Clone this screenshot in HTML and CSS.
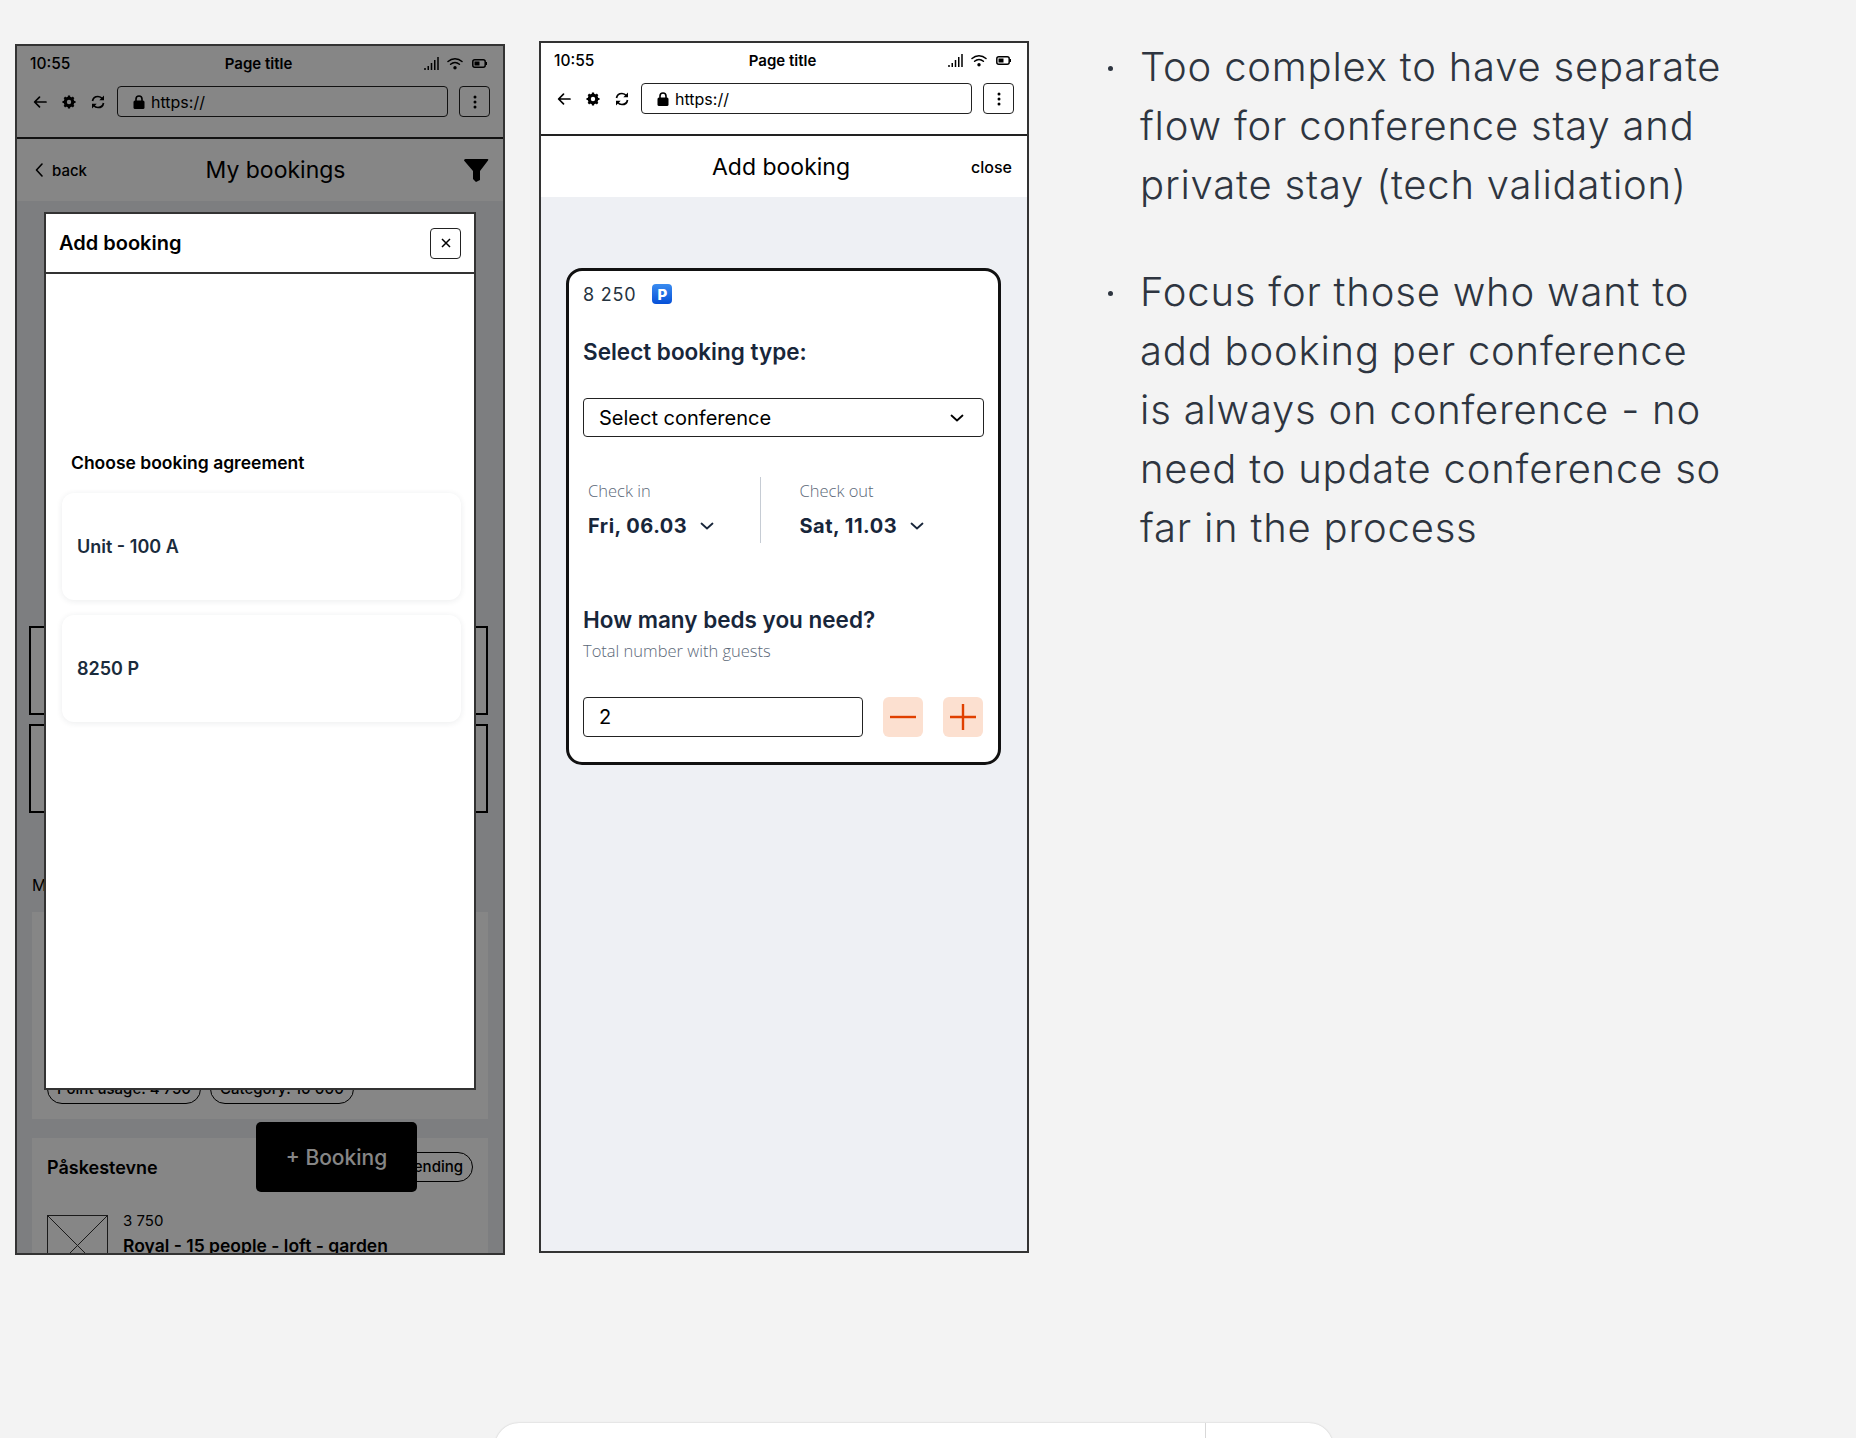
FILE: index.html
```html
<!DOCTYPE html>
<html lang="en">

<head>
    <meta charset="utf-8">
    <meta name="viewport" content="width=device-width, initial-scale=1.0">
    <title>Add booking flow</title>
    <link rel="stylesheet" href="styles.css">
</head>

<body>
    <svg class="defs" width="0" height="0">
        <symbol id="i-signal" viewBox="0 0 15 14">
            <path d="M1 14v-2M4.250 14v-4M7.500 14V7M10.750 14V4M14 14V1" stroke="currentColor" stroke-width="1.500" fill="none"/>
        </symbol>
        <symbol id="i-wifi" viewBox="0 0 16 13">
            <path d="M1 4.500C5 .8 11 .8 15 4.500M3.600 7.300c2.600-2.300 6.200-2.300 8.800 0" stroke="currentColor" stroke-width="1.500" fill="none" stroke-linecap="round"/>
            <circle cx="8" cy="10.800" r="1.700" fill="currentColor"/>
        </symbol>
        <symbol id="i-battery" viewBox="0 0 15 9">
            <rect x=".8" y=".8" width="12.400" height="7.400" rx="2" stroke="currentColor" stroke-width="1.500" fill="none"/>
            <rect x="2.500" y="2.500" width="5" height="4" fill="currentColor"/>
            <rect x="13.500" y="3" width="1.500" height="3" fill="currentColor"/>
        </symbol>
        <symbol id="i-back" viewBox="0 0 16 16">
            <path d="M14 8H3M7.500 3.200 2.600 8l4.900 4.800" stroke="currentColor" stroke-width="1.700" fill="none" stroke-linecap="round" stroke-linejoin="round"/>
        </symbol>
        <symbol id="i-gear" viewBox="0 0 16 16">
            <circle cx="8" cy="8" r="3.900" stroke="currentColor" stroke-width="3" fill="none"/>
            <path d="M8 1.500v13M1.500 8h13M3.400 3.400l9.200 9.200M12.600 3.400l-9.200 9.200" stroke="currentColor" stroke-width="2.200"/>
            <circle cx="8" cy="8" r="2.200" fill="var(--hole)"/>
        </symbol>
        <symbol id="i-reload" viewBox="0 0 16 16">
            <path d="M2.500 7C3 4 5.300 2.500 8 2.500c1.900 0 3.300.8 4.500 2.300M13.500 9c-.5 3-2.800 4.500-5.500 4.500-1.900 0-3.300-.8-4.500-2.300" stroke="currentColor" stroke-width="1.700" fill="none"/>
            <path d="M14 1.500v4.700H9.300zM2 14.500V9.800h4.700z" fill="currentColor"/>
        </symbol>
        <symbol id="i-lock" viewBox="0 0 12 14">
            <path d="M3 6V4a3 3 0 0 1 6 0v2" stroke="currentColor" stroke-width="1.600" fill="none"/>
            <rect x=".5" y="5.500" width="11" height="8.500" rx="1.500" fill="currentColor"/>
        </symbol>
        <symbol id="i-dots" viewBox="0 0 4 14">
            <circle cx="2" cy="2" r="1.500" fill="currentColor"/>
            <circle cx="2" cy="7" r="1.500" fill="currentColor"/>
            <circle cx="2" cy="12" r="1.500" fill="currentColor"/>
        </symbol>
        <symbol id="i-chevron" viewBox="0 0 14 8">
            <path d="M1.500 1.500 7 6.500l5.500-5" stroke="currentColor" stroke-width="1.800" fill="none" stroke-linecap="round" stroke-linejoin="round"/>
        </symbol>
    </svg>

    <div class="board">
        <div class="phone phone-dim">
            <div class="status">
                <span class="time">10:55</span>
                <span class="page-title">Page title</span>
                <span class="status-icons">
                    <svg class="ic-signal"><use href="#i-signal"/></svg>
                    <svg class="ic-wifi"><use href="#i-wifi"/></svg>
                    <svg class="ic-battery"><use href="#i-battery"/></svg>
                </span>
            </div>
            <div class="toolbar">
                <svg class="ic-tool"><use href="#i-back"/></svg>
                <svg class="ic-tool"><use href="#i-gear"/></svg>
                <svg class="ic-tool"><use href="#i-reload"/></svg>
                <div class="url"><svg class="ic-lock"><use href="#i-lock"/></svg>https://</div>
                <div class="more"><svg class="ic-dots"><use href="#i-dots"/></svg></div>
            </div>
            <div class="nav nav-list">
                <span class="back">
                    <svg class="ic-back-small" viewBox="0 0 8 14"><path d="M7 1 1.500 7 7 13" stroke="currentColor" stroke-width="1.600" fill="none" stroke-linecap="round" stroke-linejoin="round"/></svg>
                    back
                </span>
                <span class="nav-title">My bookings</span>
                <svg class="ic-filter" viewBox="0 0 25 23"><path d="M0 1.500Q0 0 1.500 0h22Q25 0 24 1.500L16 12v9l-4 2-3-3v-8z" fill="#000"/></svg>
            </div>
            <div class="list">
                <div class="stub"></div>
                <div class="stub"></div>
                <div class="list-label">My bookings</div>
                <div class="booking booking-short">
                    <div class="pills">
                        <span class="pill">Point usage: 4 750</span>
                        <span class="pill">Category: 10 000</span>
                    </div>
                </div>
                <div class="booking booking-cut">
                    <div class="booking-head">
                        <span class="booking-name">Påskestevne</span>
                        <span class="pill">Pending</span>
                    </div>
                    <div class="booking-row">
                        <svg class="thumb" viewBox="0 0 61 61"><rect x=".5" y=".5" width="60" height="60" fill="none" stroke="#333"/><path d="M0 0l61 61M61 0 0 61" stroke="#333"/></svg>
                        <div>
                            <div class="points">3 750</div>
                            <div class="unit">Royal - 15 people - loft - garden</div>
                        </div>
                    </div>
                </div>
            </div>
            <div class="fab">+ Booking</div>
            <div class="overlay"></div>
            <div class="modal">
                <div class="modal-head">
                    <span>Add booking</span>
                    <span class="modal-close">
                        <svg class="ic-x" viewBox="0 0 10 10"><path d="M1 1l8 8M9 1 1 9" stroke="#000" stroke-width="1.500"/></svg>
                    </span>
                </div>
                <div class="modal-body">
                    <div class="modal-label">Choose booking agreement</div>
                    <div class="agreement">Unit - 100 A</div>
                    <div class="agreement">8250 P</div>
                </div>
            </div>
        </div>

        <div class="phone phone-form">
            <div class="status">
                <span class="time">10:55</span>
                <span class="page-title">Page title</span>
                <span class="status-icons">
                    <svg class="ic-signal"><use href="#i-signal"/></svg>
                    <svg class="ic-wifi"><use href="#i-wifi"/></svg>
                    <svg class="ic-battery"><use href="#i-battery"/></svg>
                </span>
            </div>
            <div class="toolbar">
                <svg class="ic-tool"><use href="#i-back"/></svg>
                <svg class="ic-tool"><use href="#i-gear"/></svg>
                <svg class="ic-tool"><use href="#i-reload"/></svg>
                <div class="url"><svg class="ic-lock"><use href="#i-lock"/></svg>https://</div>
                <div class="more"><svg class="ic-dots"><use href="#i-dots"/></svg></div>
            </div>
            <div class="nav nav-form">
                <span class="nav-spacer"></span>
                <span class="nav-title">Add booking</span>
                <span class="nav-close">close</span>
            </div>
            <div class="form-area">
                <div class="form-card">
                    <div class="point-row">
                        <span>8 250</span>
                        <span class="p-badge">P</span>
                    </div>
                    <div class="form-title">Select booking type:</div>
                    <div class="select">
                        <span>Select conference</span>
                        <svg class="ic-chevron"><use href="#i-chevron"/></svg>
                    </div>
                    <div class="dates">
                        <div class="date date-in">
                            <div class="date-label">Check in</div>
                            <div class="date-value">Fri, 06.03 <svg class="ic-chevron"><use href="#i-chevron"/></svg></div>
                        </div>
                        <div class="date date-out">
                            <div class="date-label">Check out</div>
                            <div class="date-value">Sat, 11.03 <svg class="ic-chevron"><use href="#i-chevron"/></svg></div>
                        </div>
                    </div>
                    <div class="beds-title">How many beds you need?</div>
                    <div class="beds-note">Total number with guests</div>
                    <div class="stepper">
                        <div class="count">2</div>
                        <div class="step">
                            <svg class="ic-step" viewBox="0 0 26 26"><path d="M0 13h26" stroke="#e04000" stroke-width="2.400"/></svg>
                        </div>
                        <div class="step">
                            <svg class="ic-step" viewBox="0 0 26 26"><path d="M0 13h26M13 0v26" stroke="#e04000" stroke-width="2.400"/></svg>
                        </div>
                    </div>
                </div>
            </div>
        </div>

        <ul class="notes">
            <li>Too complex to have separate<br>flow for conference stay and<br>private stay (tech validation)</li>
            <li>Focus for those who want to<br>add booking per conference<br>is always on conference - no<br>need to update conference so<br>far in the process</li>
        </ul>
    </div>

    <div class="dock">
        <div class="dock-main"></div>
        <div class="dock-side"></div>
    </div>
</body>

</html>
```

FILE: styles.css
```css
* {
    box-sizing: border-box;
}

html, body {
    height: 100%;
}

body {
    margin: 0;
    height: 1438px;
    overflow: hidden;
    background-color: #F3F3F3;
    font-family: Inter, "Liberation Sans", sans-serif;
    color: #000;
}

.defs {
    display: block;
}

.board {
    display: flex;
    align-items: flex-start;
    height: 1423px;
    padding: 41px 0 0 15px;
    gap: 34px;
}

.phone {
    --hole: #fff;
    position: relative;
    flex: none;
    display: flex;
    flex-direction: column;
    width: 490px;
    height: 1211px;
    border: 2px solid #333;
    background-color: #EEF0F4;
    overflow: hidden;
}

.phone-dim {
    margin-top: 3px;
}

.phone-form {
    height: 1212px;
}

/* status bar and browser bar, same on both phones */
.status {
    display: grid;
    grid-template-columns: 1fr auto 1fr;
    flex: none;
    align-items: center;
    height: 34px;
    padding: 0 16px 0 13px;
    background-color: #fff;
    font-size: 15px;
}

.time {
    font-size: 15.500px;
    font-weight: 500;
}

.page-title {
    font-size: 15px;
    font-weight: 600;
}

.status-icons {
    display: flex;
    justify-content: flex-end;
    align-items: center;
    gap: 8px;
}

.ic-signal {
    width: 15px;
    height: 14px;
}

.ic-wifi {
    width: 16px;
    height: 13px;
}

.ic-battery {
    width: 15px;
    height: 9px;
    margin-left: 1px;
}

.toolbar {
    display: flex;
    flex: none;
    align-items: center;
    gap: 13px;
    padding: 6px 13px 20px 15px;
    background-color: #fff;
    border-bottom: 2px solid #222;
}

.ic-tool {
    width: 16px;
    height: 16px;
    flex: none;
}

.url {
    display: flex;
    align-items: center;
    flex: 1;
    height: 31px;
    margin-left: -2px;
    padding-left: 15px;
    border: 1.500px solid #222;
    border-radius: 4px;
    font-size: 16px;
}

.ic-lock {
    width: 12px;
    height: 14px;
    margin-right: 6px;
}

.more {
    display: flex;
    align-items: center;
    justify-content: center;
    flex: none;
    width: 31px;
    height: 31px;
    margin-left: -2px;
    border: 1.500px solid #222;
    border-radius: 4px;
}

.ic-dots {
    width: 4px;
    height: 14px;
}

.nav {
    display: flex;
    align-items: center;
    justify-content: space-between;
    height: 62px;
    background-color: #fff;
    flex: none;
}

.nav-title {
    font-size: 23px;
}

.nav-list {
    padding: 0 14px 0 18px;
}

.back {
    display: flex;
    align-items: center;
    gap: 9px;
    font-size: 15px;
    font-weight: 500;
}

.ic-back-small {
    width: 8px;
    height: 14px;
}

.ic-filter {
    width: 25px;
    height: 23px;
}

.nav-form {
    height: 61px;
    padding: 0 17px 0 11px;
}

.nav-spacer {
    width: 39px;
}

.nav-close {
    width: 39px;
    font-size: 16px;
    font-weight: 500;
}

/* list behind the dialog */
.list {
    display: flex;
    flex-direction: column;
    flex: none;
    padding: 425px 15px 0 12px;
}

.stub {
    height: 89px;
    margin-bottom: 9px;
    background-color: #fff;
    border: 2px solid #000;
}

.stub + .stub {
    margin-bottom: 0;
}

.list-label {
    margin: 60px 0 15px 3px;
    font-size: 16px;
    line-height: 24px;
    white-space: nowrap;
}

.booking {
    margin-left: 3px;
    padding: 15px;
    background-color: #fff;
}

.booking-short {
    display: flex;
    align-items: flex-end;
    height: 207px;
    margin-bottom: 19px;
}

.booking-cut {
    padding-top: 14px;
}

.pills {
    display: flex;
    gap: 9px;
}

.pill {
    display: inline-block;
    height: 30px;
    padding: 0 9px;
    border: 1.500px solid #000;
    border-radius: 15px;
    font-size: 15px;
    font-weight: 500;
    line-height: 27px;
}

.booking-head {
    display: flex;
    justify-content: space-between;
    align-items: center;
    margin-bottom: 33px;
}

.booking-name {
    font-size: 18px;
    font-weight: 600;
}

.booking-row {
    display: flex;
    gap: 15px;
}

.thumb {
    width: 61px;
    height: 61px;
    flex: none;
}

.points {
    font-size: 15px;
    line-height: 18px;
    margin-top: -3px;
}

.unit {
    margin-top: 5px;
    font-size: 17.500px;
    font-weight: 600;
    white-space: nowrap;
}

.fab {
    position: absolute;
    left: 239px;
    top: 1076px;
    display: flex;
    align-items: center;
    justify-content: center;
    width: 161px;
    height: 70px;
    background-color: #000;
    border-radius: 5px;
    color: #fff;
    font-size: 21px;
    font-weight: 500;
}

.overlay {
    position: absolute;
    inset: 0;
    background-color: rgba(0, 0, 0, 0.475);
}

/* dialog */
.modal {
    position: absolute;
    left: 27px;
    top: 166px;
    width: 432px;
    height: 878px;
    background-color: #fff;
    border: 2px solid #333;
}

.modal-head {
    display: flex;
    align-items: center;
    justify-content: space-between;
    height: 60px;
    padding: 0 13px;
    border-bottom: 2px solid #333;
    font-size: 20px;
    font-weight: 600;
}

.modal-close {
    display: flex;
    align-items: center;
    justify-content: center;
    width: 31px;
    height: 31px;
    border: 1.500px solid #222;
    border-radius: 4px;
}

.ic-x {
    width: 10px;
    height: 10px;
}

.modal-body {
    padding: 177px 13px 0 16px;
}

.modal-label {
    margin: 0 0 18px 9px;
    font-size: 17.500px;
    font-weight: 600;
    line-height: 24px;
}

.agreement {
    display: flex;
    align-items: center;
    height: 107px;
    margin-bottom: 15px;
    padding-left: 15px;
    background-color: #fff;
    border-radius: 12px;
    box-shadow: 0 1px 6px rgba(30, 40, 60, 0.09);
    color: #1a2b3c;
    font-size: 18px;
    font-weight: 600;
}

/* form */
.form-area {
    flex: 1;
    padding: 71px 26px 0 25px;
}

.form-card {
    height: 497px;
    padding: 13px 14px 0;
    background-color: #fff;
    border: 3px solid #111;
    border-radius: 16px;
}

.point-row {
    display: flex;
    align-items: center;
    gap: 16px;
    height: 20px;
    color: #26333f;
    font-size: 18px;
    letter-spacing: 0.8px;
}

.p-badge {
    display: flex;
    align-items: center;
    justify-content: center;
    width: 20px;
    height: 20px;
    background: linear-gradient(#3a8cf0, #0650d8);
    border-radius: 4px;
    color: #fff;
    font-size: 15px;
    font-weight: 800;
    letter-spacing: 0;
}

.form-title {
    margin-top: 34px;
    color: #18263a;
    font-size: 22.500px;
    font-weight: 600;
    line-height: 28px;
}

.select {
    display: flex;
    align-items: center;
    justify-content: space-between;
    height: 39px;
    margin-top: 32px;
    padding: 0 19px 0 15px;
    border: 1.500px solid #222;
    border-radius: 4px;
    font-size: 20px;
}

.ic-chevron {
    width: 14px;
    height: 8px;
    flex: none;
}

.dates {
    display: flex;
    height: 66px;
    margin-top: 40px;
}

.date {
    padding-top: 4px;
}

.date-in {
    width: 177.500px;
    padding-left: 5px;
    border-right: 1.500px solid #c6ccd4;
}

.date-out {
    padding-left: 39px;
}

.date-label {
    color: #5b6878;
    font-family: "Open Sans", sans-serif;
    font-size: 16.500px;
    font-weight: 300;
    line-height: 20px;
}

.date-value {
    display: flex;
    align-items: center;
    margin-top: 11px;
    color: #18263a;
    font-size: 20px;
    font-weight: 700;
    line-height: 28px;
    letter-spacing: 0.5px;
    white-space: pre;
}

.date-value .ic-chevron {
    margin-left: 8px;
}

.beds-title {
    margin-top: 61px;
    color: #18263a;
    font-size: 22.500px;
    font-weight: 600;
    line-height: 32px;
}

.beds-note {
    margin-top: 5px;
    color: #5b6878;
    font-family: "Open Sans", sans-serif;
    font-size: 16.500px;
    font-weight: 300;
    line-height: 20px;
}

.stepper {
    display: flex;
    gap: 20px;
    margin-top: 36px;
}

.count {
    display: flex;
    align-items: center;
    width: 280px;
    height: 40px;
    padding-left: 15px;
    border: 1.500px solid #222;
    border-radius: 4px;
    font-size: 20px;
}

.step {
    display: flex;
    align-items: center;
    justify-content: center;
    width: 40px;
    height: 40px;
    background-color: #fce0d0;
    border-radius: 6px;
}

.ic-step {
    width: 26px;
    height: 26px;
}

/* notes on the right */
.notes {
    flex: 1;
    margin: -4px 0 0;
    padding: 0 0 0 77px;
    color: #2e3540;
    font-size: 40px;
    font-weight: 300;
    line-height: 59px;
    letter-spacing: 0.8px;
    list-style: none;
    white-space: nowrap;
}

.notes li {
    position: relative;
    margin-bottom: 48px;
}

.notes li::before {
    content: "";
    position: absolute;
    left: -32px;
    top: 29px;
    width: 5px;
    height: 5px;
    background-color: #2e3540;
    border-radius: 50%;
}

.dock {
    display: flex;
    width: 838px;
    height: 60px;
    margin-left: 495px;
    background-color: #fff;
    border-radius: 24px 24px 0 0;
    box-shadow: 0 0 2px rgba(0, 0, 0, 0.2);
}

.dock-main {
    width: 711px;
    border-right: 1px solid #d8d8d8;
}
```
